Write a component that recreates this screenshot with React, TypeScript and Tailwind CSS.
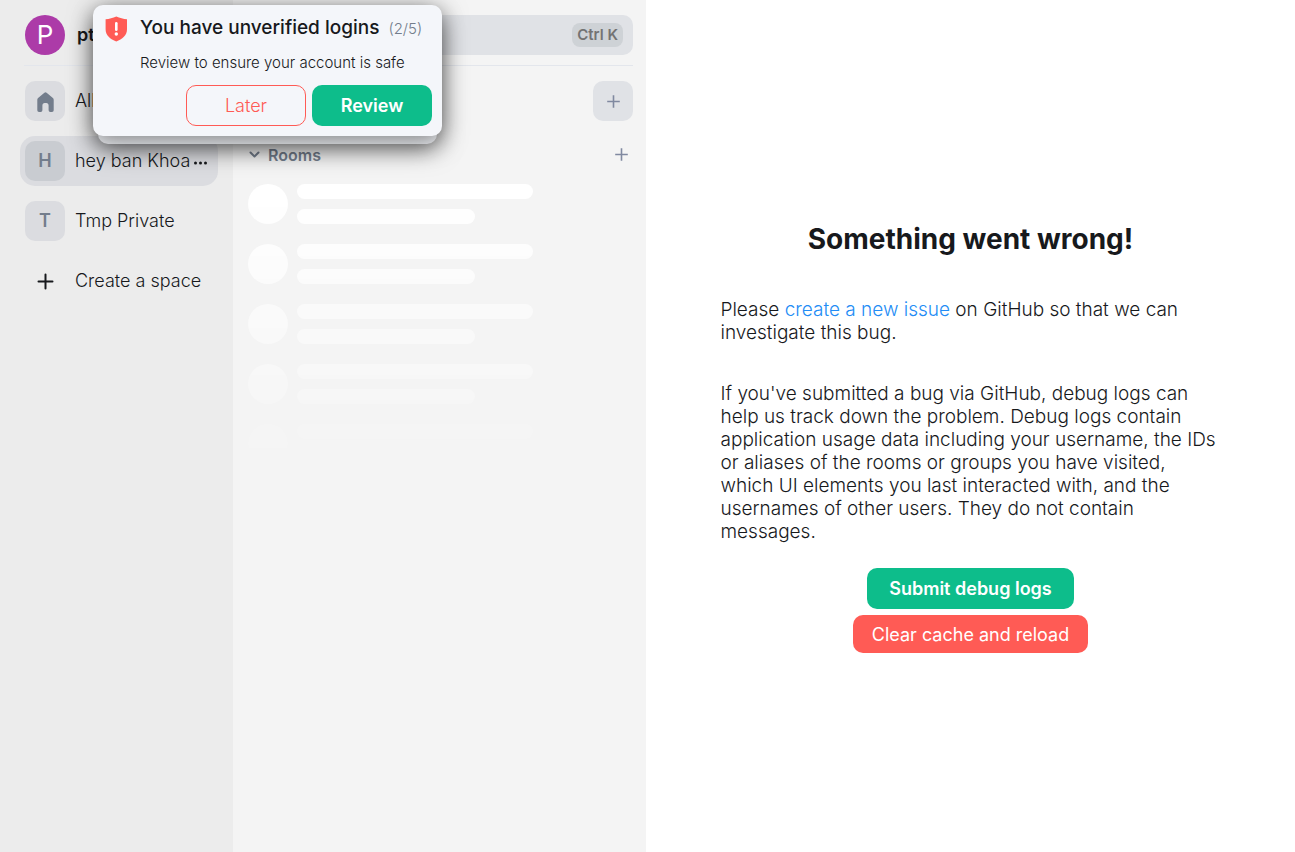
import type { ReactNode } from "react";

function PlusIcon({ className }: { className: string }) {
  return (
    <svg className={className} viewBox="0 0 16 16" fill="none" stroke="currentColor" strokeWidth="2" strokeLinecap="round" aria-hidden="true">
      <path d="M8.500 1.500v14M1.500 8.500h14" />
    </svg>
  );
}

function ThinPlusIcon() {
  return (
    <svg className="size-[13px]" viewBox="0 0 13 13" fill="currentColor" aria-hidden="true">
      <path d="M5.700 0.200h1.600v5.500h5.500v1.600H7.300v5.500H5.700V7.300H0.200V5.700h5.500z" />
    </svg>
  );
}

function HomeIcon() {
  return (
    <svg className="mt-[2px] size-5" viewBox="0 0 20 20" fill="currentColor" aria-hidden="true">
      <path d="M9.400 0.700a1.700 1.700 0 0 1 2.200 0l6.300 5.400c.5.400.8 1 .8 1.700v10.500a1.700 1.700 0 0 1-1.700 1.700h-1.700a1.700 1.700 0 0 1-1.700-1.700v-4.800c0-1.300-.9-2.400-2.200-2.400h-1.800c-1.300 0-2.200 1.100-2.200 2.400v4.800A1.700 1.700 0 0 1 5.700 20H4a1.700 1.700 0 0 1-1.700-1.700V7.800c0-.7.3-1.300.8-1.700z" />
    </svg>
  );
}

function ShieldIcon() {
  return (
    <svg className="mt-[1px] h-[26px] w-[22px] shrink-0 text-[#ff5b55]" viewBox="0 0 22 26" aria-hidden="true">
      <path d="M11.300 0.500C7.900 2.100 4.300 3 0.600 3.200V13.300C0.600 19.400 5.300 23.200 11.300 25.600C17.300 23.200 22 19.400 22 13.300V3.200C18.400 3 14.700 2.100 11.300 0.500Z" fill="currentColor" />
      <path d="M11.300 7.200v6.600" stroke="white" strokeWidth="2.600" strokeLinecap="round" />
      <circle cx="11.300" cy="18" r="1.700" fill="white" />
    </svg>
  );
}

function SpaceItem({ tile, label }: { tile: ReactNode; label: string }) {
  return (
    <li className="flex h-[50px] items-center px-[5px]">
      <a href="#" className="flex min-w-0 items-center gap-[10px]">
        <span className="flex size-10 shrink-0 items-center justify-center rounded-[10px] bg-[#dbdce0] text-lg font-semibold text-[#737d8c]">
          {tile}
        </span>
        <span className="truncate">{label}</span>
      </a>
    </li>
  );
}

function SpacePanel() {
  return (
    <nav aria-label="Spaces" className="flex w-[233px] shrink-0 flex-col bg-[#ececec]">
      <div className="ml-6 flex h-[66px] items-center gap-3 border-b border-[#e3e6ec] pt-1 pl-px">
        <button type="button" aria-label="User menu" className="flex size-10 items-center justify-center rounded-full bg-[#ac3ba8] pt-px text-[26px] font-normal text-white">
          P
        </button>
        <span className="font-semibold">ptman</span>
      </div>
      <ul className="flex flex-col gap-[10px] pt-[10px] pr-[15px] pl-5">
        <SpaceItem tile={<HomeIcon />} label="All rooms" />
        <li className="flex h-[50px] items-center gap-[2px] rounded-[15px] bg-[#dbdce0] px-[5px]">
          <a href="#" className="flex items-center gap-[10px] whitespace-nowrap">
            <span className="flex size-10 items-center justify-center rounded-[10px] bg-[#c9ccd1] text-lg font-semibold text-[#737d8c]">H</span>
            <span>hey ban Khoa</span>
          </a>
          <button type="button" aria-label="Space options" className="shrink-0 pt-1">
            <svg className="h-1 w-4" viewBox="0 0 16 4" fill="currentColor" aria-hidden="true">
              <circle cx="3.500" cy="2" r="1.500" />
              <circle cx="8.500" cy="2" r="1.500" />
              <circle cx="13.500" cy="2" r="1.500" />
            </svg>
          </button>
        </li>
        <SpaceItem tile="T" label="Tmp Private" />
        <li className="flex h-[50px] items-center px-[5px]">
          <button type="button" className="flex items-center gap-[10px]">
            <span className="flex size-10 items-center justify-center">
              <PlusIcon className="size-4 overflow-visible" />
            </span>
            Create a space
          </button>
        </li>
      </ul>
    </nav>
  );
}

function RoomListPanel() {
  return (
    <section aria-label="Room list" className="flex w-[413px] shrink-0 flex-col bg-[#f4f4f4] pr-[13px]">
      <div className="flex h-[66px] items-center border-b border-[#e3e6ec] pt-1">
        <button type="button" aria-label="Search" className="ml-[15px] flex h-10 grow items-center justify-end rounded-[10px] bg-[#e0e2e6] pr-[10px]">
          <kbd className="rounded-lg bg-[#ced2d6] px-[5px] font-[Inter] text-[15px] leading-6 font-semibold text-[#737373]">Ctrl K</kbd>
        </button>
      </div>
      <div className="flex justify-end pt-[15px]">
        <button type="button" aria-label="Add" className="flex size-10 items-center justify-center rounded-[10px] bg-[#e0e2e6] text-[#8089a0]">
          <ThinPlusIcon />
        </button>
      </div>
      <div className="mt-[22px] flex h-6 items-center justify-between pr-[5px] pl-4 text-[#737d8c]">
        <button type="button" className="flex items-center gap-2 text-base font-semibold">
          <svg className="h-3 w-[11px]" viewBox="0 0 11 12" fill="none" stroke="currentColor" strokeWidth="2" strokeLinecap="round" strokeLinejoin="round" aria-hidden="true">
            <path d="M1.500 3.500 5.500 7.500 9.500 3.500" />
          </svg>
          Rooms
        </button>
        <button type="button" aria-label="Add room" className="pb-[2px] text-[#8089a0]">
          <ThinPlusIcon />
        </button>
      </div>
      <div aria-hidden="true" className="mt-[17px] flex h-[288px] flex-col gap-5 overflow-hidden pl-[15px] [mask-image:linear-gradient(180deg,black,transparent)]">
        {[0, 1, 2, 3, 4].map((row) => (
          <div key={row} className="flex gap-[9px]">
            <div className="size-10 shrink-0 rounded-full bg-white" />
            <div className="flex flex-col gap-[10px]">
              <div className="h-[15px] w-[236px] rounded-lg bg-white" />
              <div className="h-[15px] w-[178px] rounded-lg bg-white" />
            </div>
          </div>
        ))}
      </div>
    </section>
  );
}

function ErrorPanel() {
  return (
    <main className="flex grow items-center justify-center bg-white px-4 pt-5">
      <div className="flex max-w-[500px] flex-col items-center">
        <h1 className="text-[28px] leading-[38px] font-bold">Something went wrong!</h1>
        <div className="mt-10 flex flex-col gap-[38px] text-[19px] leading-[23px] font-light">
          <p>
            Please <a href="#" className="text-[#238cf5]">create a new issue</a> on GitHub so that we can investigate this bug.
          </p>
          <p>
            If you've submitted a bug via GitHub, debug logs can help us track down the problem. Debug logs contain
            application usage data including your username, the IDs or aliases of the rooms or groups you have visited,
            which UI elements you last interacted with, and the usernames of other users. They do not contain messages.
          </p>
        </div>
        <button type="button" className="mt-[25px] h-[41px] rounded-[10px] bg-[#0dbd8b] px-[22px] pt-[2px] text-lg font-semibold text-white">
          Submit debug logs
        </button>
        <button type="button" className="mt-[6px] h-[38px] rounded-[10px] bg-[#ff5b55] px-[19px] pt-[2px] text-lg font-normal text-white">
          Clear cache and reload
        </button>
      </div>
    </main>
  );
}

function LoginToast() {
  return (
    <div className="absolute top-[5px] left-[93px] w-[349px]">
      <div className="absolute inset-x-[5px] top-2 -bottom-2 rounded-[10px] bg-[#f4f6fa] shadow-[0_5px_25px_rgba(0,0,0,0.5)]" />
      <div role="alert" className="relative flex h-[131px] flex-col rounded-[10px] bg-[#f4f6fa] pt-[10px] pr-[10px] pl-3 shadow-[0_5px_25px_rgba(0,0,0,0.5)]">
        <div className="flex items-start gap-[13px]">
          <ShieldIcon />
          <h2 className="text-[19px] leading-[26px] font-medium">You have unverified logins</h2>
          <span className="-ml-1 text-[15px] leading-[27px] font-light text-[#737d8c]">(2/5)</span>
        </div>
        <p className="mt-[11px] pl-[35px] text-[15px] leading-5 font-light">Review to ensure your account is safe</p>
        <div className="mt-3 flex justify-end gap-[6px] text-lg">
          <button type="button" className="h-[41px] w-[120px] rounded-[10px] border border-[#ff5b55] font-light text-[#ff5b55]">Later</button>
          <button type="button" className="h-[41px] w-[120px] rounded-[10px] bg-[#0dbd8b] font-semibold text-white">Review</button>
        </div>
      </div>
    </div>
  );
}

export default function App() {
  return (
    <div className="relative flex min-h-screen bg-white font-[Inter,sans-serif] text-lg font-light text-[#17191c]">
      <SpacePanel />
      <RoomListPanel />
      <ErrorPanel />
      <LoginToast />
    </div>
  );
}
